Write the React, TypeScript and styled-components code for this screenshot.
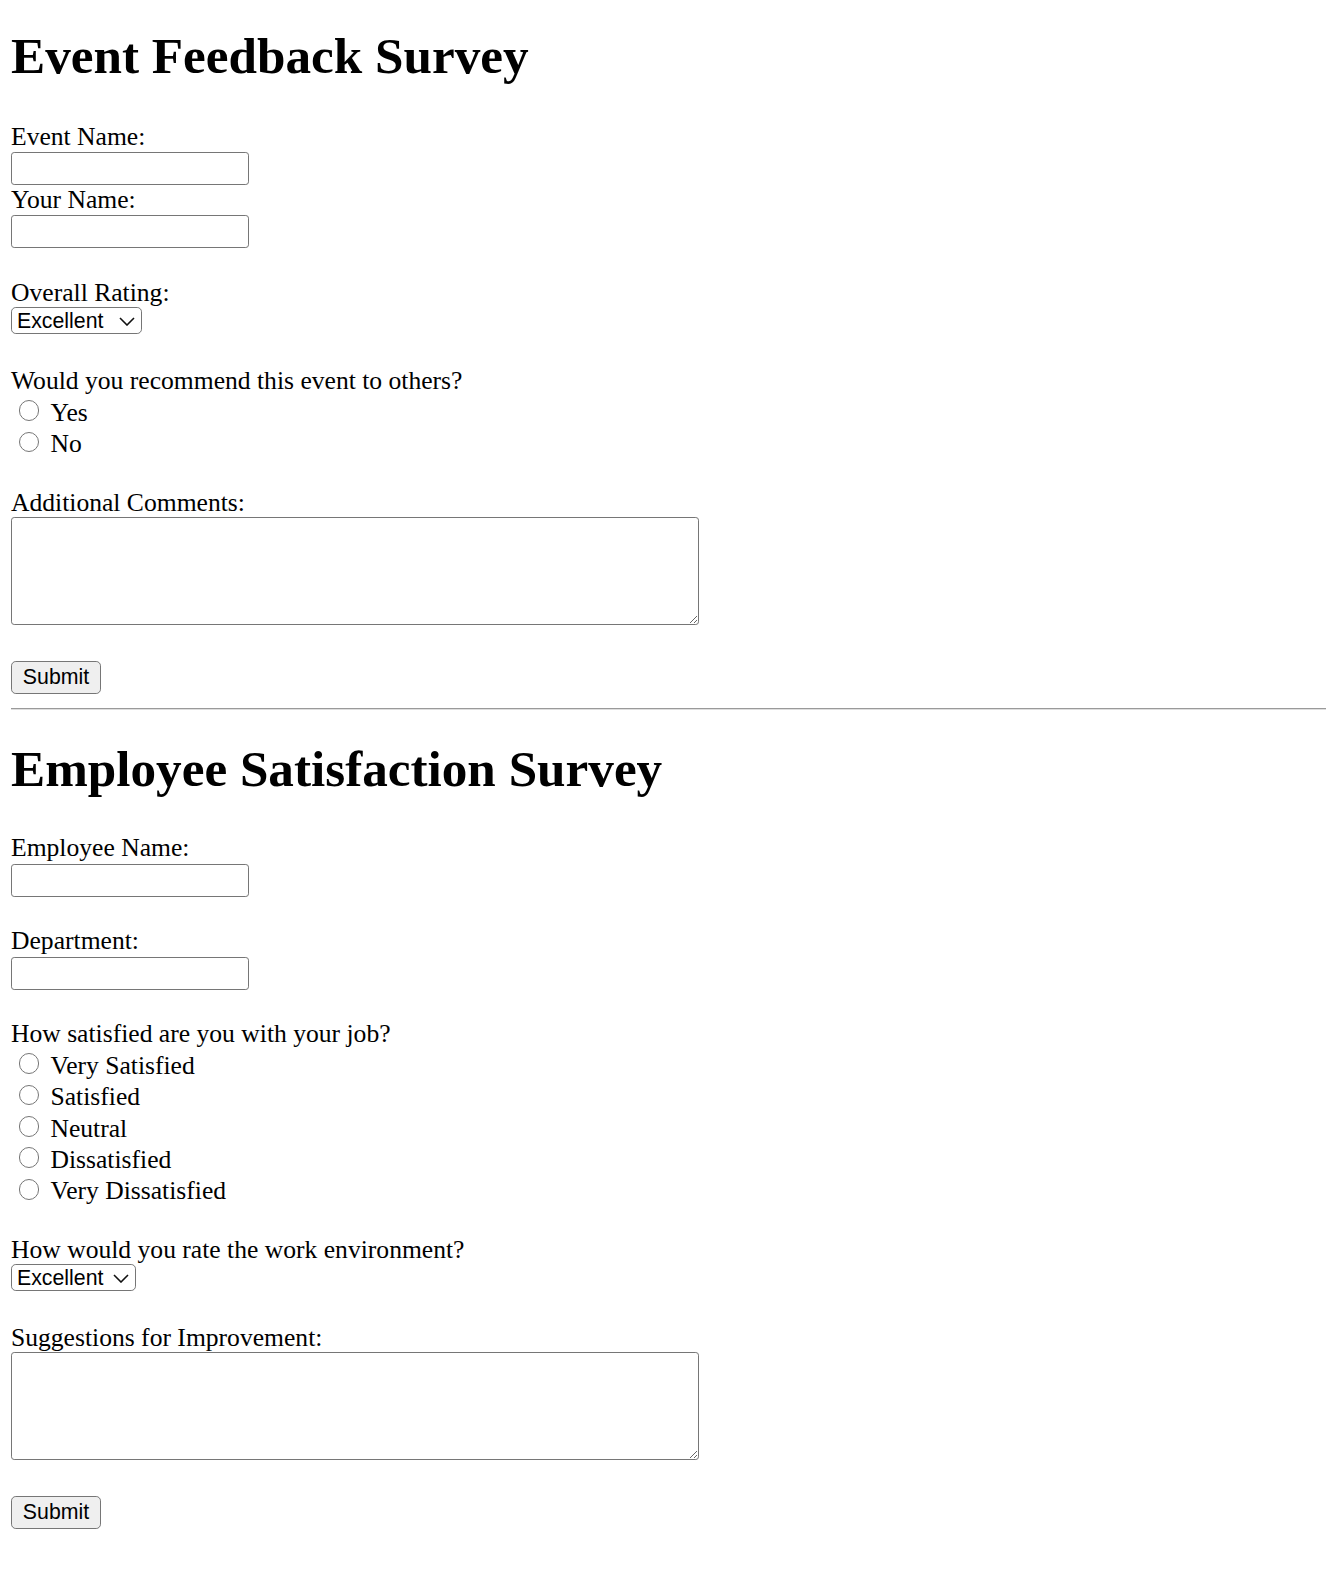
import * as React from "react";
import styled, { createGlobalStyle } from "styled-components";

const LINE = 29.4;

const GlobalStyle = createGlobalStyle`
  html, body {
    margin: 0;
    padding: 0;
    background: #ffffff;
  }

  body {
    font-family: "Liberation Serif", "Times New Roman", serif;
    font-size: 25.6px;
    line-height: ${LINE}px;
    color: #000000;
  }
`;

const Page = styled("div")`
  padding: 0 0 20px 11px;
`;

const Title = styled("h1")<{ $top: number; $bottom: number }>`
  font-size: 51.2px;
  line-height: 58.8px;
  font-weight: 700;
  margin: ${({ $top, $bottom }) => `${$top}px 0 ${$bottom}px`};
`;

const Form = styled("form")`
  margin: 0;
`;

const Group = styled("div")<{ $spaced?: boolean }>`
  display: flex;
  flex-direction: column;
  align-items: flex-start;
  margin-top: ${({ $spaced }) => ($spaced ? `${LINE}px` : "0")};
`;

const FieldLabel = styled("label")`
  display: block;
  height: ${LINE}px;
  white-space: nowrap;
`;

const TextInput = styled("input")`
  display: block;
  box-sizing: border-box;
  width: 238px;
  height: 33px;
  margin: 1px 0 0;
  padding: 2px 4px;
  border: 1.6px solid #767676;
  border-radius: 3.2px;
  background: #ffffff;
  font-family: "Liberation Sans", Arial, sans-serif;
  font-size: 21.3px;
`;

const SelectRow = styled("div")`
  height: ${LINE}px;
`;

const SelectBox = styled("div")<{ $width: number }>`
  position: relative;
  width: ${({ $width }) => $width}px;

  svg {
    position: absolute;
    right: 7px;
    top: 10px;
    pointer-events: none;
  }
`;

const Select = styled("select")`
  appearance: none;
  -webkit-appearance: none;
  display: block;
  box-sizing: border-box;
  width: 100%;
  height: 27px;
  margin: 0;
  padding: 0 0 0 5px;
  border: 1.6px solid #767676;
  border-radius: 4.8px;
  background: #ffffff;
  color: #000000;
  font-family: "Liberation Sans", Arial, sans-serif;
  font-size: 21.3px;
  line-height: 24px;
`;

const RadioRow = styled("label")`
  display: flex;
  align-items: flex-start;
  height: 31.4px;
  white-space: nowrap;
`;

const Radio = styled("input")`
  appearance: none;
  -webkit-appearance: none;
  box-sizing: border-box;
  width: 20.8px;
  height: 20.8px;
  margin: 4.8px 0 0 7.5px;
  border: 1.5px solid #767676;
  border-radius: 50%;
  background: #ffffff;

  &:checked {
    border-color: #1a73e8;
    box-shadow: inset 0 0 0 3.5px #ffffff;
    background: #1a73e8;
  }
`;

const RadioText = styled("span")`
  margin: 2.3px 0 0 11.2px;
`;

const TextArea = styled("textarea")`
  display: block;
  box-sizing: border-box;
  width: 688px;
  height: 108px;
  margin: 0 0 6.5px;
  padding: 3px;
  border: 1.6px solid #767676;
  border-radius: 3.2px;
  background: #ffffff;
  font-family: "Liberation Mono", monospace;
  font-size: 21.3px;
`;

const SubmitButton = styled("button")`
  display: block;
  box-sizing: border-box;
  width: 90px;
  height: 33px;
  margin: 0;
  padding: 0;
  border: 1.6px solid #767676;
  border-radius: 4.8px;
  background: #efefef;
  color: #000000;
  font-family: "Liberation Sans", Arial, sans-serif;
  font-size: 21.3px;
`;

const Divider = styled("hr")`
  height: 0;
  margin: 14.5px 0 0;
  border: none;
  border-top: 1px solid #9a9a9a;
  border-bottom: 1px solid #dedede;
`;

const Chevron = () => (
  <svg width="16" height="9" viewBox="0 0 16 9" fill="none">
    <path d="M1 1 L8 8 L15 1" stroke="#111111" strokeWidth="1.6" />
  </svg>
);

interface SelectFieldProps {
  readonly id: string;
  readonly width: number;
  readonly options: string[];
}

const SelectField = ({ id, width, options }: SelectFieldProps) => (
  <SelectRow>
    <SelectBox $width={width}>
      <Select id={id} defaultValue={options[0]}>
        {options.map((o) => (
          <option key={o}>{o}</option>
        ))}
      </Select>
      <Chevron />
    </SelectBox>
  </SelectRow>
);

interface RadioGroupProps {
  readonly name: string;
  readonly options: string[];
}

const RadioGroup = ({ name, options }: RadioGroupProps) => (
  <>
    {options.map((o) => (
      <RadioRow key={o}>
        <Radio type="radio" name={name} value={o} />
        <RadioText>{o}</RadioText>
      </RadioRow>
    ))}
  </>
);

const EventSurvey = () => (
  <>
    <Title $top={27.1} $bottom={35.8}>Event Feedback Survey</Title>
    <Form onSubmit={(e) => e.preventDefault()}>
      <Group>
        <FieldLabel htmlFor="eventName">Event Name:</FieldLabel>
        <TextInput id="eventName" type="text" />
        <FieldLabel htmlFor="yourName">Your Name:</FieldLabel>
        <TextInput id="yourName" type="text" />
      </Group>
      <Group $spaced>
        <FieldLabel htmlFor="rating">Overall Rating:</FieldLabel>
        <SelectField id="rating" width={131} options={["Excellent", "Good", "Average", "Poor"]} />
      </Group>
      <Group $spaced>
        <FieldLabel>Would you recommend this event to others?</FieldLabel>
        <RadioGroup name="recommend" options={["Yes", "No"]} />
      </Group>
      <Group $spaced>
        <FieldLabel htmlFor="comments">Additional Comments:</FieldLabel>
        <TextArea id="comments" />
      </Group>
      <Group $spaced>
        <SubmitButton type="submit">Submit</SubmitButton>
      </Group>
    </Form>
  </>
);

const EmployeeSurvey = () => (
  <>
    <Title $top={30} $bottom={34.3}>Employee Satisfaction Survey</Title>
    <Form onSubmit={(e) => e.preventDefault()}>
      <Group>
        <FieldLabel htmlFor="employeeName">Employee Name:</FieldLabel>
        <TextInput id="employeeName" type="text" />
      </Group>
      <Group $spaced>
        <FieldLabel htmlFor="department">Department:</FieldLabel>
        <TextInput id="department" type="text" />
      </Group>
      <Group $spaced>
        <FieldLabel>How satisfied are you with your job?</FieldLabel>
        <RadioGroup
          name="satisfaction"
          options={["Very Satisfied", "Satisfied", "Neutral", "Dissatisfied", "Very Dissatisfied"]}
        />
      </Group>
      <Group $spaced>
        <FieldLabel htmlFor="environment">How would you rate the work environment?</FieldLabel>
        <SelectField id="environment" width={125} options={["Excellent", "Good", "Fair", "Poor"]} />
      </Group>
      <Group $spaced>
        <FieldLabel htmlFor="suggestions">Suggestions for Improvement:</FieldLabel>
        <TextArea id="suggestions" />
      </Group>
      <Group $spaced>
        <SubmitButton type="submit">Submit</SubmitButton>
      </Group>
    </Form>
  </>
);

export default function App(): JSX.Element {
  return (
    <>
      <GlobalStyle />
      <Page>
        <EventSurvey />
        <Divider />
        <EmployeeSurvey />
      </Page>
    </>
  );
}
